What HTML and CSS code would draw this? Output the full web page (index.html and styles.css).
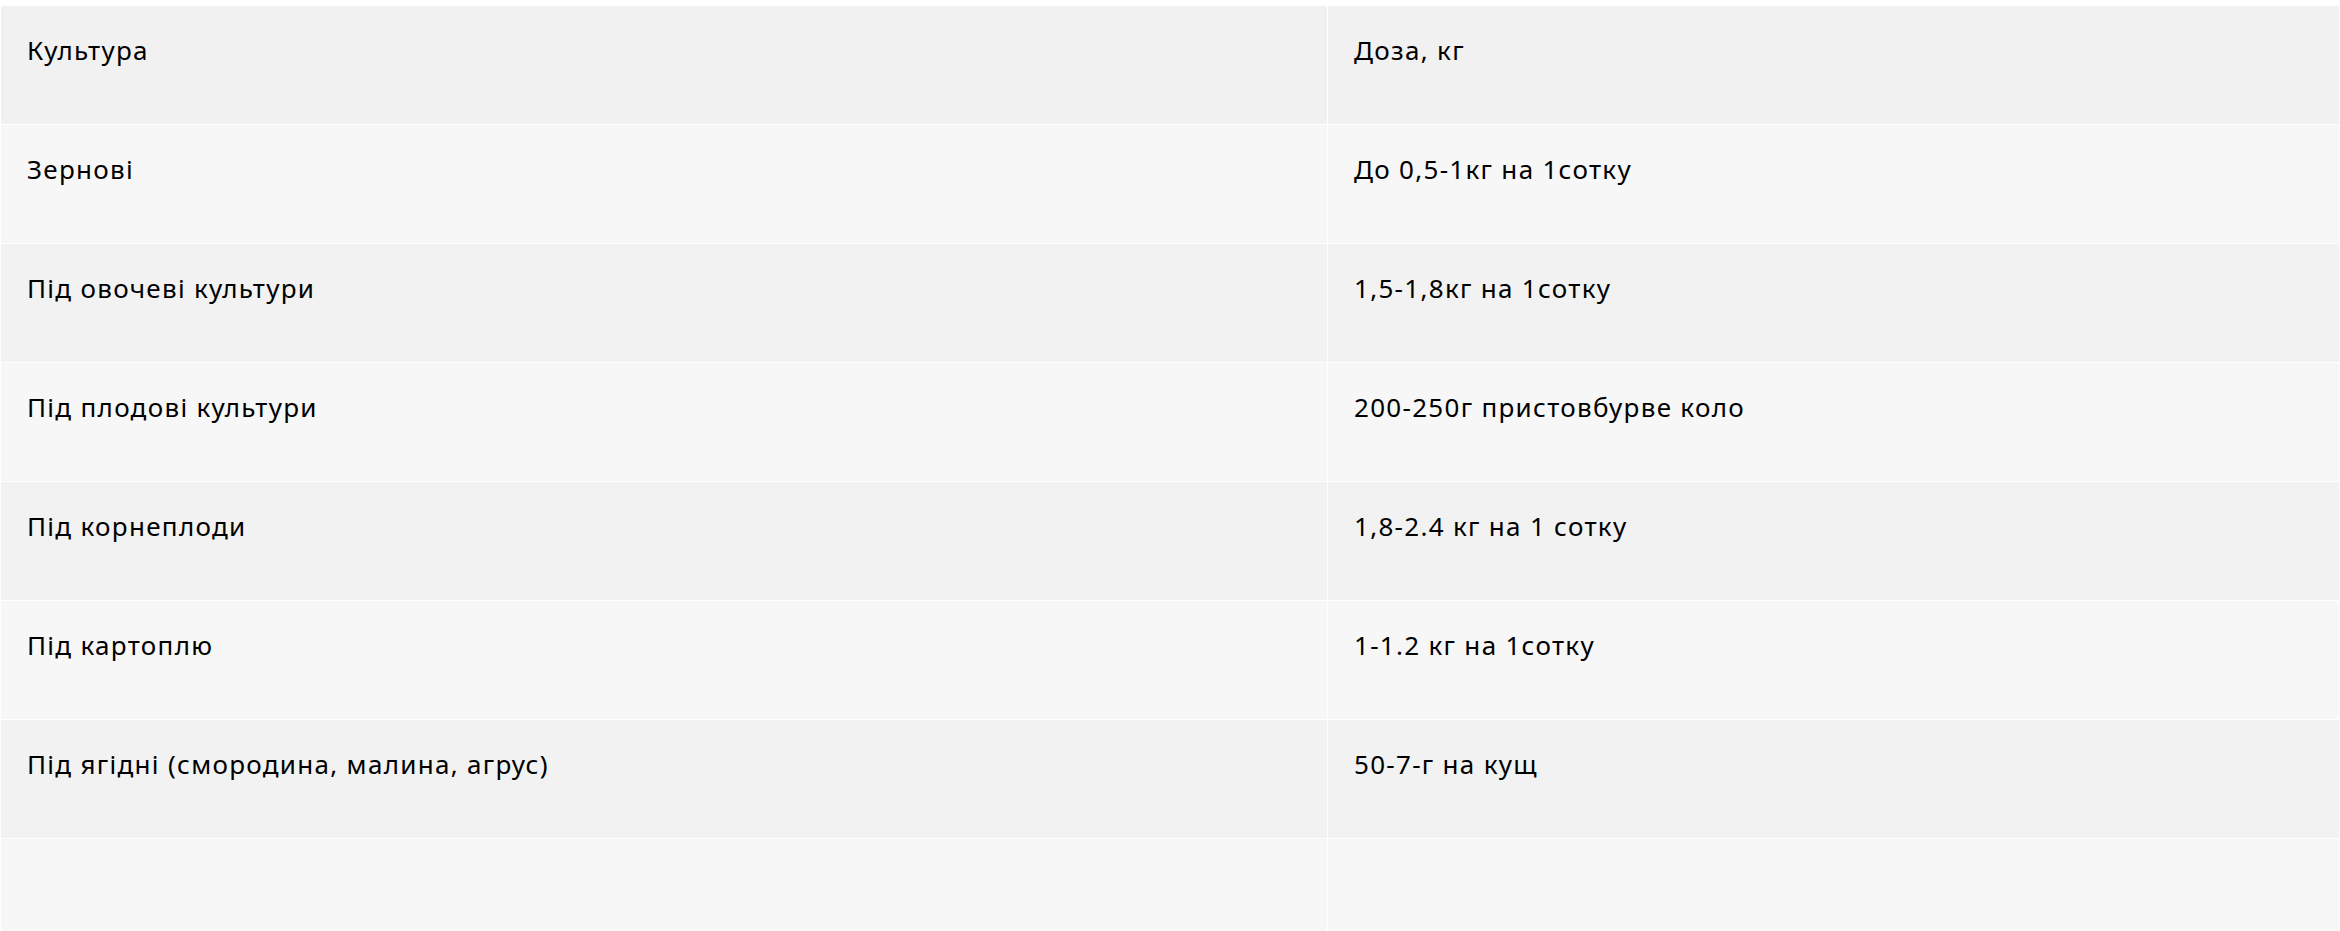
FILE: index.html
```html
<!DOCTYPE html>
<html lang="uk">
<head>
<meta charset="utf-8">
<title>Дози</title>
<link rel="stylesheet" href="styles.css">
</head>
<body>
<table class="dose-table">
  <colgroup>
    <col class="col-crop">
    <col class="col-dose">
  </colgroup>
  <tbody>
    <tr class="row-head"><td>Культура</td><td>Доза, кг</td></tr>
    <tr class="row-light"><td>Зернові</td><td>До 0,5-1кг на 1сотку</td></tr>
    <tr class="row-dark"><td>Під овочеві культури</td><td>1,5-1,8кг на 1сотку</td></tr>
    <tr class="row-light"><td>Під плодові культури</td><td>200-250г пристовбурве коло</td></tr>
    <tr class="row-dark"><td>Під корнеплоди</td><td>1,8-2.4 кг на 1 сотку</td></tr>
    <tr class="row-light"><td>Під картоплю</td><td>1-1.2 кг на 1сотку</td></tr>
    <tr class="row-dark"><td>Під ягідні (смородина, малина, агрус)</td><td>50-7-г на кущ</td></tr>
    <tr class="row-light"><td></td><td></td></tr>
  </tbody>
</table>
</body>
</html>
```
FILE: styles.css
```css
html, body {
  margin: 0;
  padding: 0;
  background: #ffffff;
}

body {
  padding-top: 5px;
  font-family: "Noto Sans", "Open Sans", sans-serif;
  color: #000000;
}

.dose-table {
  width: 2340px;
  border-collapse: collapse;
  table-layout: fixed;
}

.col-crop {
  width: 1327px;
}

.dose-table td {
  border: 1px solid #ffffff;
  height: 119px;
  box-sizing: border-box;
  padding: 26px 26px 0 26px;
  vertical-align: top;
  font-size: 26px;
  line-height: 36px;
  letter-spacing: 1.3px;
}

.row-head td {
  height: 119px;
  padding-top: 26px;
  background: #f1f1f1;
}

.row-dark td {
  background: #f2f2f2;
}

.row-light td {
  background: #f7f7f7;
}
```
